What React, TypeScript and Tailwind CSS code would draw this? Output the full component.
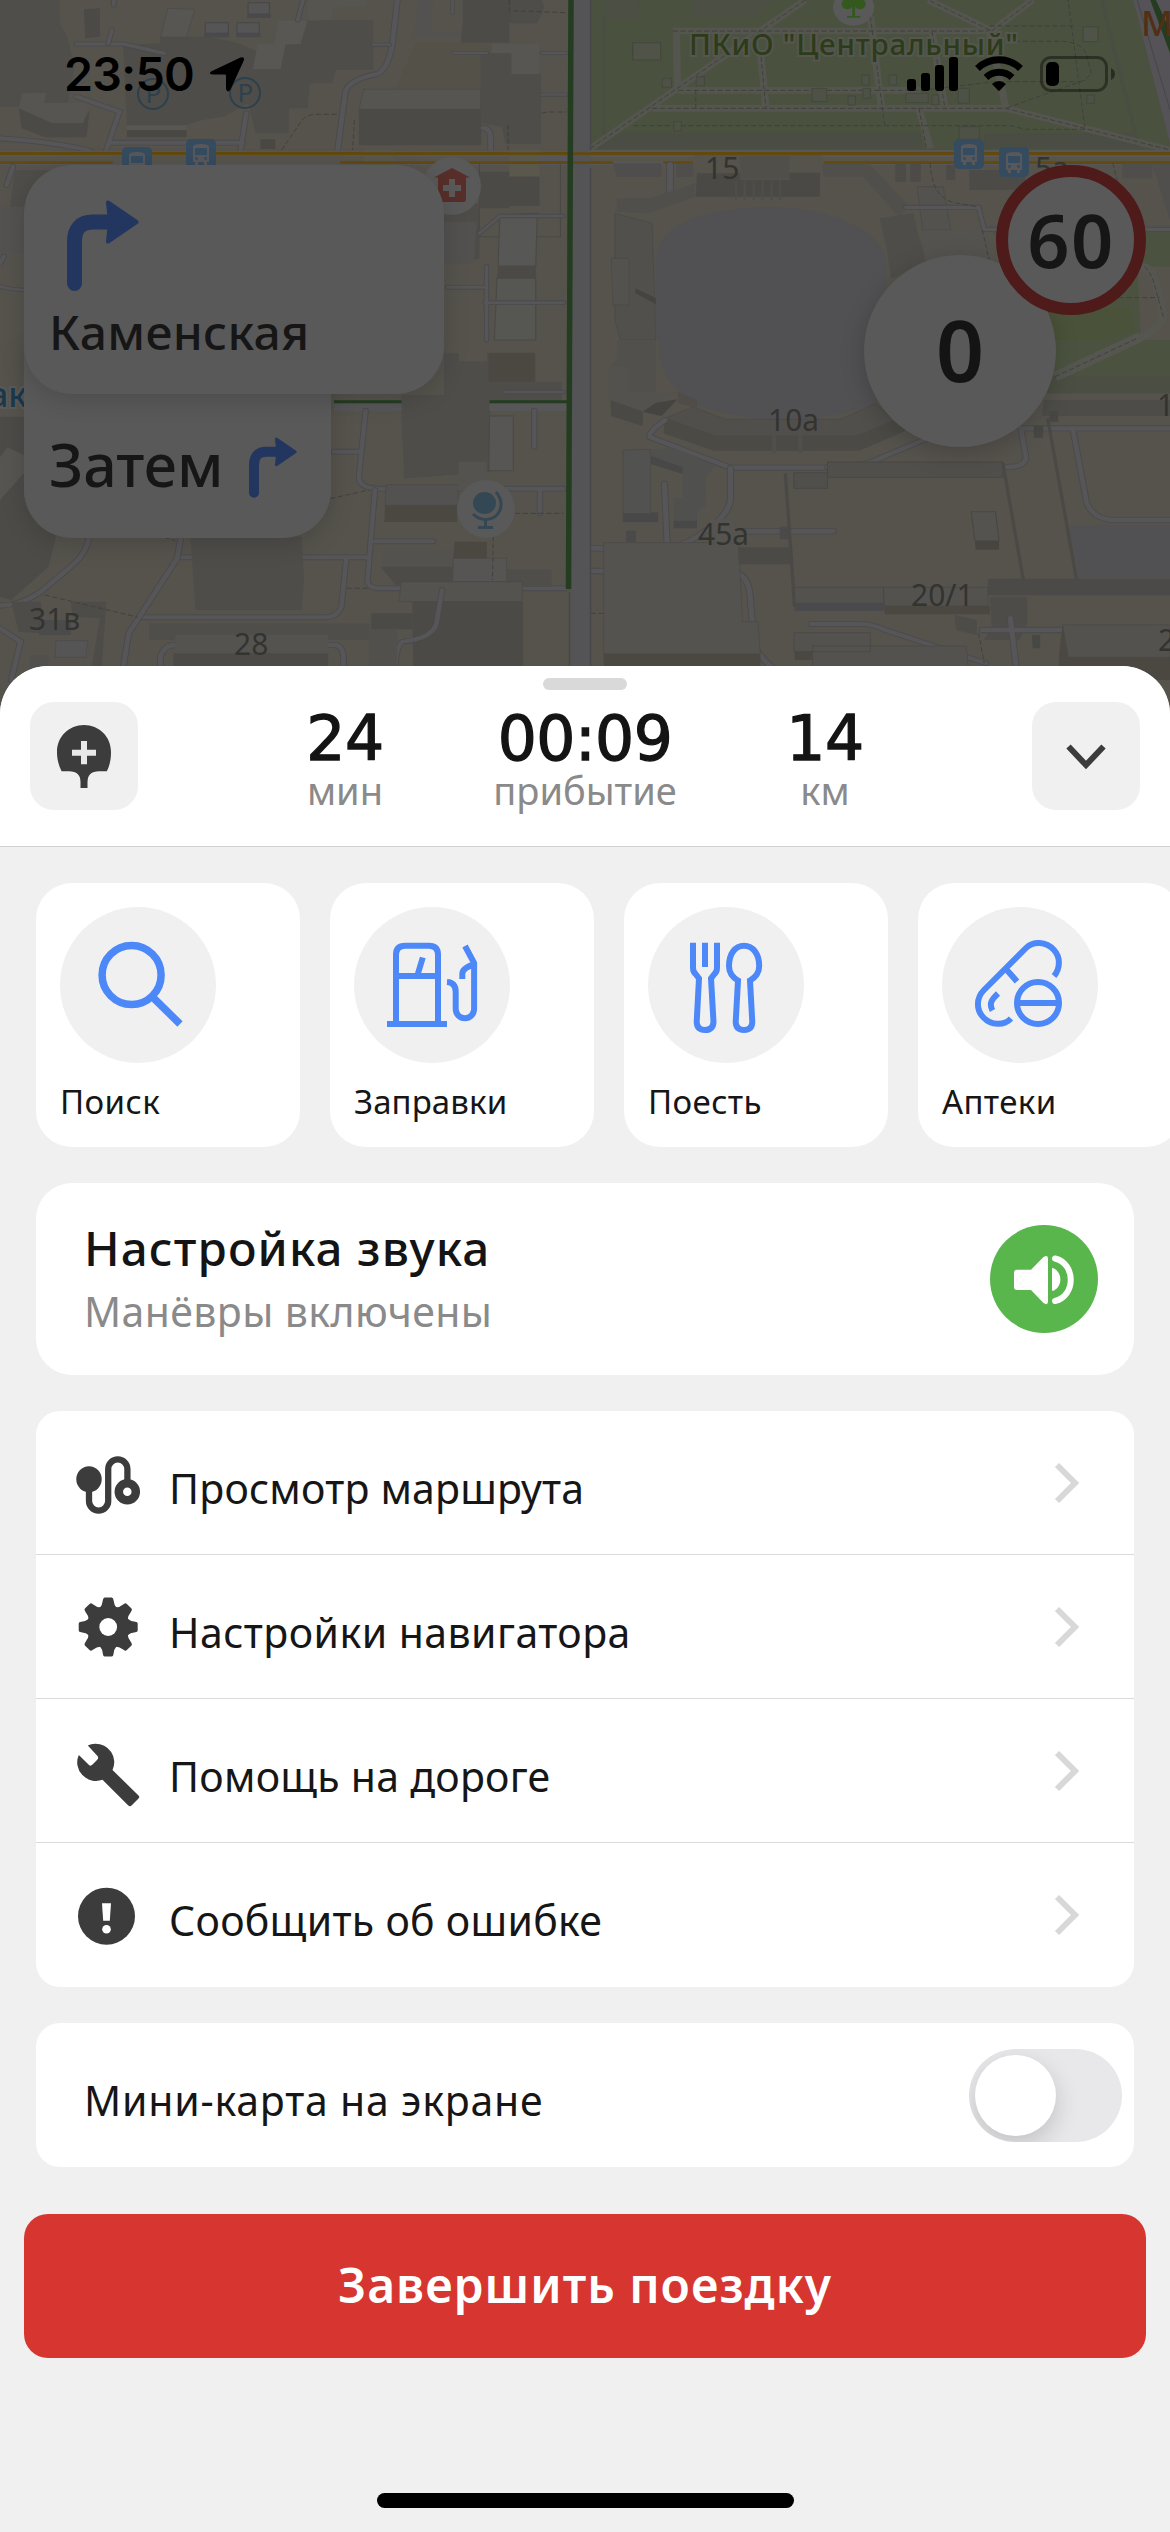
import React from "react";

type Category = { label: string; icon: React.ReactNode; tracking: string };
type MenuItem = { label: string; icon: React.ReactNode; tracking: string };

/* ---------- map ---------- */

function Road({ d, w = 14 }: { d: string; w?: number }) {
  return (
    <>
      <path d={d} stroke="#4a4a4b" strokeWidth={w + 5} fill="none" strokeLinecap="round" />
      <path d={d} stroke="#565659" strokeWidth={w} fill="none" strokeLinecap="round" />
    </>
  );
}

function Dashed({ d }: { d: string }) {
  return <path d={d} stroke="#3e3e3a" strokeWidth="2.5" strokeDasharray="14 7" fill="none" />;
}

function BusStop({ x, y }: { x: number; y: number }) {
  return (
    <g transform={`translate(${x} ${y})`}>
      <rect width="30" height="30" rx="5" fill="#354b5f" />
      <path
        d="M7 8Q7 5 15 5Q23 5 23 8V23H21V26H18V23H12V26H9V23H7Z"
        fill="#58585a"
      />
      <rect x="9" y="9" width="12" height="7" fill="#354b5f" />
      <circle cx="10.5" cy="19.5" r="1.4" fill="#354b5f" />
      <circle cx="19.5" cy="19.5" r="1.4" fill="#354b5f" />
    </g>
  );
}

function TileNW() {
  return (
    <g transform="scale(0.3731 0.3333)">
      <path d="M0 0H160V70L180 110L200 200L180 320H0Z" fill="#4f4e4b" />
      <path d="M430 110H560L640 130L700 160L760 130L820 60H1000V210H900L890 250H830L825 325H775V400H685L665 310L600 350L540 360L500 375H340L330 135L430 130Z" fill="#4e4d4a" />
      <path d="M340 390H500V412H340Z" fill="#4a4843" />
      <path d="M450 25L522 28L500 112L430 112Z" fill="#575653" stroke="#4a4a47" strokeWidth="2" />
      <path d="M825 0H985V20L890 24V60L825 62Z" fill="#575550" />
      <path d="M745 62H825L805 132L765 134L752 207H678L690 132H735Z" fill="#585753" />
      <path d="M340 378H500V390H340Z" fill="#585753" />
      <path d="M665 8H722V42H665ZM550 68H612V100H550ZM635 68H695V100H635Z" fill="#555556" stroke="#474748" strokeWidth="3" />
      <path d="M662 42H726V54H662ZM547 100H614V112H547ZM633 100H698V112H633Z" fill="#4a4a4c" />
      <path d="M225 28L268 25V110L228 115Z" fill="#4b4a46" />
      <path d="M60 280L125 278L118 308H238L222 370H140L50 325Z" fill="#565551" />
      <path d="M50 325L140 370H222L240 330L232 412H122L58 385Z" fill="#4b4a46" />
      <path d="M1125 0H1240V112H1105Z" fill="#535251" />
      <path d="M1160 0H1240V95H1155Z" fill="#56534d" />
      <path d="M1240 0H1370V68H1240ZM1240 68H1365V128H1235Z" fill="#4d4b48" />
      <path d="M1115 128H1318L1325 265H1060Z" fill="#545149" />
      <path d="M975 268H1288V328H962Z" fill="#565552" stroke="#4a4a48" strokeWidth="2" />
      <path d="M962 328H1290V436H962Z" fill="#4c4a46" />
      <path d="M1318 132H1445V222H1370V160H1318Z" fill="#575653" />
      <path d="M1288 160H1370V222H1450V432H1355L1345 380L1290 370Z" fill="#4e4d4a" />
      <path d="M1370 0H1450L1460 20L1440 70H1370Z" fill="#4e4d4a" />
      <path d="M698 418H738V447H698Z" fill="#4a4843" />
      <Road d="M205 132H330Q400 150 440 160" w={10} />
      <Road d="M300 90L290 130" w={10} />
      <Road d="M305 0V15M812 0L798 60" w={10} />
      <Road d="M205 290L320 335L285 450M0 415Q140 425 240 452M300 428H650M660 340L645 450" w={12} />
      <Road d="M1065 0L1052 130Q1040 210 1010 222Q930 240 925 280L905 450" w={13} />
      <Road d="M1215 159H1305M1452 159H1518M1452 284H1518M1000 134H1045M1213 0V40" w={7} />
      <Road d="M1295 384Q1315 384 1315 420V450" w={13} />
      <Dashed d="M755 450L810 360Q820 345 845 343H905M1365 0V32L1518 38M950 360L945 450M1362 375V450M1452 340L1465 336H1518" />
      <path d="M0 452H1568V496H0Z" fill="#57565a" />
      <path d="M0 470H300V482H0ZM915 470H975V482H915Z" fill="#585546" />
      <path d="M0 456H1568V465H0ZM0 484H330V492H0ZM400 484H1568V492H400Z" fill="#62490f" />
      <path d="M302 468H915V492H302ZM1057 470H1365V492H1057Z" fill="#56544d" />
      <path d="M975 450H1057V496H975ZM1365 450H1446V530H1365Z" fill="#5a574c" />
      <path d="M1285 515H1365V625H1285ZM1365 530H1446V618H1365Z" fill="#4b4a46" />
      <path d="M1180 610H1285V775L1240 790H1190Z" fill="#4e4c48" />
      <path d="M1285 490H1502V710H1285Z" fill="none" stroke="#4a4946" strokeWidth="3" />
      <path d="M1340 645L1440 640L1436 798H1335Z" fill="#575755" stroke="#4a4946" strokeWidth="3" />
      <path d="M1335 798H1436V835H1332Z" fill="#4b4a46" />
      <path d="M1332 835H1436V1020H1325Z" fill="#565653" stroke="#4a4946" strokeWidth="3" />
      <path d="M1190 665H1278L1270 790H1190Z" fill="#525150" />
      <Road d="M1200 862H1300M1304 800V1020M1300 908H1510" w={9} />
      <Road d="M1510 648H1340L1285 700" w={8} />
      <Road d="M35 500L18 555M0 790L10 770" w={12} />
      <path d="M40 510H140V600L65 640H25Z" fill="#4e4d4a" />
      <path d="M0 620H64V760H0Z" fill="#535250" />
      <Road d="M0 860Q40 870 64 870" w={8} />
    </g>
  );
}

function TileNE() {
  return (
    <g transform="translate(585 0) scale(0.3731 0.3333)">
      <path d="M15 0H1470L1568 430V450H15Z" fill="#4a523f" />
      <path d="M1470 0H1568V430Z" fill="#555357" />
      <path d="M55 0H145V60H55ZM285 0H500L470 50H285Z" fill="#4c4f44" />
      <path d="M128 128H203V180H128ZM1335 80H1375V125H1335Z" fill="#505347" stroke="#42473a" strokeWidth="3" />
      <path d="M50 398H900L905 445H20ZM1070 400H1480L1485 445H1070Z" fill="#4a4d43" />
      <g stroke="#53554e" strokeWidth="20" fill="none">
        <path d="M590 0L15 445M235 93H1090L920 0M1090 93L1200 0M245 95L248 270M250 271H900M180 325H1128M470 150L485 325M765 50L795 325M930 95L965 325M895 325L925 445M1085 95L1128 325L1568 450" />
      </g>
      <g stroke="#494d42" strokeWidth="10" fill="none">
        <path d="M50 45V400M1385 0L1475 400" />
      </g>
      <Dashed d="M590 0L15 445M235 93H1090L920 0M1090 93L1200 0M250 271H900L1100 245H1330M180 325H1128L1568 450M130 377H1140L1180 388H1340L1295 0M470 150L485 325M765 50L803 375M930 95L965 325M895 325L915 445M297 270V325M1085 78H1310M1110 124H1280Q1340 130 1345 170L1357 220L1340 240L1128 325" />
      <g fill="#4d5146" stroke="#40453a" strokeWidth="2">
        <path d="M608 265H648V305H608ZM1000 265H1030V310H1000ZM207 235H232V262H207ZM298 230H320V258H298ZM742 225H762V255H742ZM815 225H835V255H815ZM745 265H765V295H745ZM705 288H725V315H705ZM1345 285H1365V310H1345ZM238 365H258V393H238ZM1003 380H1057V418H1003ZM860 280H920V308H860ZM930 285H948V315H930Z" />
      </g>
      <circle cx="720" cy="22" r="55" fill="#595959" />
      <path d="M702 -5A17 17 0 0 0 690 20A15 15 0 0 0 716 20V48H702V53H738V48H724V20A15 15 0 0 0 750 20A17 17 0 0 0 738 -5Z" fill="#34591f" />
      <path d="M1515 0L1568 160V90L1530 0Z" fill="#243c20" />
      <path d="M1480 0L1568 330" stroke="#47484a" strokeWidth="3" />

      <path d="M0 450H1568V496H0Z" fill="#57565a" />
      <path d="M0 472H1568V484H0Z" fill="#585546" />
      <path d="M0 456H1568V465H0ZM0 484H75V492H0ZM210 484H290V492H210ZM640 484H1568V492H640Z" fill="#62490f" />

      <path d="M75 490H205V530H85ZM245 490H290V530H245Z" fill="#4f4e4c" />
      <path d="M290 460H635V530H295Z" fill="#55534b" />
      <path d="M415 468H548V538H415Z" fill="#504f4a" />
      <path d="M300 520H415V540H548V518H630V590H297Z" fill="#4a4945" />
      <path d="M405 542V600M428 542V600M452 542V600M476 542V600M500 542V600M523 542V600" stroke="#504e4a" strokeWidth="6" />
      <path d="M635 490H715L760 530H640ZM715 490H760L870 620L840 650Z" fill="#504f4c" />
      <Road d="M228 495V575" w={16} />
      <path d="M85 595H175L295 550V590L170 640L85 635Z" fill="#504f4c" />
      <path d="M80 640L180 670L190 1020H95L80 960Z" fill="#51504d" stroke="#4a4946" strokeWidth="2" />
      <path d="M70 775H118V915H75Z" fill="#53524f" stroke="#4a4946" strokeWidth="2" />
      <path d="M135 865L190 895V912L135 880Z" fill="#454440" />
      <path d="M190 790Q190 690 300 650Q390 620 500 620Q620 625 700 665Q800 710 808 790V1020H190Z" fill="#515154" />
      <path d="M790 655L880 640L890 690L920 800L820 835L808 740Z" fill="#4e4d49" />
      <path d="M890 560H960L980 690H905Z" fill="#53524f" stroke="#4a4946" strokeWidth="2" />
      <path d="M905 690H1075L1085 780H910Z" fill="#545350" />
      <Road d="M860 622H1055L1070 688H1568" w={10} />
      <path d="M1030 510H1180V570H1030ZM832 490H860V545H832ZM872 490H900V545H872ZM968 495H992V540H968Z" fill="#4c4b47" />
      <path d="M1440 490H1520V535H1440Z" fill="#4f4e4c" />
      <path d="M1092 696H1568V800H1500L1480 790L1490 1020H1230V900Z" fill="#4b5340" />
      <path d="M1490 800Q1520 800 1530 850L1550 940Q1550 980 1480 1020" stroke="#565651" strokeWidth="22" fill="none" />
      <Dashed d="M925 490Q930 600 1000 610L1050 620M1065 690L1085 790M1500 800Q1520 820 1530 870L1550 950M1430 893H1540M1415 490L1430 560" />
      <path d="M1520 490L1568 660V490Z" fill="#504f4d" />
      <path d="M1235 922H1460L1475 990L1400 1020H1240Z" fill="#4a5239" />
    </g>
  );
}

function TileSW() {
  return (
    <g transform="translate(0 340) scale(0.3731 0.3333)">
      <path d="M0 230H64V470L150 590L130 680L30 780L0 770Z" fill="#4c4b48" />
      <path d="M0 350L20 322L64 345V400L0 480Z" fill="#565551" />
      <path d="M1190 40H1230V64H1305V40H1435V125H1505V182H1315V395L1083 415L1075 180H1190Z" fill="#4e4d4a" />
      <path d="M1310 38H1433V125H1310Z" fill="#4b4842" />
      <path d="M895 190H1524V212H895Z" fill="#57575a" />
      <Road d="M980 212L962 410Q960 442 1010 446H1510M895 335H960M1432 212V320M1447 450V520" w={12} />
      <Road d="M1005 450L985 720Q985 745 1020 745H1520M1005 604H1160M485 652H985M928 655L915 800Q905 832 870 832H380" w={12} />
      <Road d="M1355 156H1510" w={8} />
      <path d="M895 181H1530V190H895Z" fill="#243d21" />
      <path d="M1075 165H1312V395L1085 415Z" fill="#4e4d4a" />
      <path d="M1312 228H1376V392H1310Z" fill="#575654" stroke="#4a4946" strokeWidth="3" />
      <path d="M1035 434H1228V496H1032Z" fill="#535250" stroke="#4a4946" strokeWidth="2" />
      <path d="M1032 496H1225V546H1030Z" fill="#4b4842" />
      <path d="M1230 365H1305V450H1225Z" fill="#545350" />
      <path d="M1218 605H1305V655H1215Z" fill="#4b4842" />
      <path d="M1028 632H1215V680H1020Z" fill="#53524f" />
      <path d="M1020 680H1215V735H1060Z" fill="#4c4b47" />
      <path d="M1215 655H1358V725H1213Z" fill="#565553" stroke="#4a4946" strokeWidth="2" />
      <path d="M1358 688H1478V740H1358Z" fill="#4f4e4b" />
      <path d="M1075 725H1400V785H1070Z" fill="#545350" stroke="#4a4946" strokeWidth="2" />
      <path d="M1105 785H1402V1020H1108ZM995 820H1105V868H995Z" fill="#4c4a46" />
      <path d="M510 590H808L815 720L808 810H524L515 660Z" fill="#4e4d4a" />
      <Road d="M240 590Q230 640 200 670L110 755Q60 795 0 797M485 590L475 655L345 880L325 1020" w={13} />
      <Road d="M0 865L55 905L30 1020M430 1000V950Q440 915 470 915H900Q925 920 920 980V1020" w={13} />
      <Road d="M1185 750L1170 850Q1160 895 1080 905Q1060 915 1060 1000" w={12} />
      <path d="M30 785H110V880L50 875ZM190 785H285L270 1020H240L268 835L195 830Z" fill="#4d4c49" />
      <path d="M105 840H190V885H105Z" fill="#4b4b4b" />
      <path d="M150 902H235L230 952H148Z" fill="#555556" stroke="#4a4a4a" strokeWidth="2" />
      <path d="M400 850H990V900H400Z" fill="#4f4e4b" />
      <path d="M470 884H880V940H468Z" fill="#545350" />
      <path d="M465 940H880V1020H465Z" fill="#4c4a46" />
      <path d="M990 868V1020H1065V868ZM80 945H130V1020H80Z" fill="#51504c" />
      <Dashed d="M885 476L990 450M440 592L470 602M120 765L370 832M930 745H985M1380 520H1510M1322 590L1320 720" />
    </g>
  );
}

function TileSE() {
  return (
    <g transform="translate(585 340) scale(0.3731 0.3333)">
      <path d="M198 0H830L780 190Q650 245 500 240Q360 225 290 190Q200 120 198 30Z" fill="#515154" />
      <path d="M85 0H190V155L115 157V80H65L85 60Z" fill="#51504d" />
      <path d="M65 80H115V157H245L155 215L65 180Z" fill="#53524f" />
      <path d="M68 180L155 215V258L70 228Z" fill="#4a4945" />
      <path d="M155 215L190 188L248 178L205 228Z" fill="#454440" />
      <path d="M215 235L290 200L375 238H685L780 190L830 245L725 288H350Z" fill="#514f4b" stroke="#4a4946" strokeWidth="2" />
      <path d="M215 235L350 288H725L830 240L860 272L735 332H345L210 280Z" fill="#4b4a45" />
      <path d="M507 275V340M577 275V340" stroke="#514f4b" strokeWidth="11" />
      <path d="M248 155L300 180V205L250 190Z" fill="#504d49" />
      <Road d="M215 240Q165 280 175 292L390 383H650Q740 385 790 355L960 275" w={13} />
      <Road d="M390 385V480Q385 530 300 590Q260 622 200 625H15M213 432L220 610M430 574H665" w={14} />
      <Road d="M650 381H1135Q1190 380 1180 340L1168 265H1568M1308 270L1345 490Q1365 540 1420 540H1568" w={13} />
      <path d="M1230 0H1568V160H1245Z" fill="#4b5340" />
      <path d="M1245 108H1568V160H1235Z" fill="#4b4e42" />
      <path d="M1260 110L1490 -10" stroke="#555650" strokeWidth="30" />
      <Dashed d="M1260 110L1480 -5" />
      <path d="M1230 180H1568V228H1225Z" fill="#4d4c49" />
      <path d="M1245 212H1268V245H1245ZM1203 258H1228V293H1203Z" fill="#474744" />
      <path d="M102 330L175 328V518H195V545H102Z" fill="#525251" stroke="#4a4946" strokeWidth="2" />
      <path d="M177 328L240 325L350 378L322 410L325 495L300 515V565H238V475H262V400L177 372Z" fill="#50504f" />
      <path d="M102 520H195V545H102ZM238 542H300V565H238ZM177 348L262 382V402L177 372Z" fill="#484848" />
      <path d="M650 366H1120V412H650ZM560 398H650V445H560Z" fill="#504f4b" stroke="#484744" strokeWidth="3" />
      <path d="M537 400L562 800M1120 370L1175 720M1240 235L1325 765" stroke="#4b4946" strokeWidth="9" fill="none" />
      <path d="M1035 515H1100L1110 603H1045Z" fill="#555350" stroke="#484744" strokeWidth="3" />
      <path d="M1045 603H1110V629H1047Z" fill="#484540" />
      <path d="M1298 556H1568V715H1325Z" fill="#515154" />
      <path d="M1080 716H1568V766H1080Z" fill="#4c4a49" />
      <Road d="M15 693H390Q435 700 442 760L452 900Q455 940 505 985" w={14} />
      <path d="M50 608H412L422 845H463L470 942H50Z" fill="#545350" stroke="#4a4946" strokeWidth="2" />
      <path d="M50 942H470V1020H50Z" fill="#4b4842" />
      <path d="M410 622H550V673H412Z" fill="#4c4a47" />
      <path d="M335 538H400V608H335Z" fill="#555450" />
      <path d="M522 560H545V598H522ZM110 572H136V606H110Z" fill="#4a4a4a" />
      <path d="M562 742H800V790H562ZM800 742H1080V798H803Z" fill="#53524f" stroke="#484744" strokeWidth="2" />
      <path d="M562 790H802V813H562Z" fill="#4a4a4c" />
      <path d="M803 798H1085V823H803Z" fill="#4b4842" />
      <path d="M1085 772H1185V850L1165 900H1070L1090 860ZM990 825L1050 840V885L995 870Z" fill="#4d4c48" />
      <Road d="M605 852H740Q770 852 800 868L1075 970" w={12} />
      <Road d="M1065 870H1280M1140 835L1160 1020" w={14} />
      <path d="M560 878H765V935H560ZM610 918H1022L1030 1020H610Z" fill="#53524f" stroke="#484744" strokeWidth="2" />
      <path d="M562 935H608V960H562Z" fill="#4b4842" />
      <path d="M1280 855H1568V952H1295Z" fill="#53524f" stroke="#484744" strokeWidth="2" />
      <path d="M1280 855L1295 952H1568V1020H1270V950Z" fill="#4b4842" />
      <path d="M1198 885H1220V925H1200Z" fill="#474744" />
      <Dashed d="M15 820H50M1055 880L1070 970" />
    </g>
  );
}

function MapView() {
  return (
    <svg className="block h-full w-full" viewBox="0 0 1170 720" fontFamily="'Noto Sans', sans-serif">
      <rect width="1170" height="720" fill="#56534d" />
      <TileNW />
      <TileNE />
      <TileSW />
      <TileSE />

      {/* vertical avenue */}
      <rect x="572" width="18" height="720" fill="#545456" />
      <path d="M590.5 0V150M590.5 168V720M569.5 592V720" stroke="#46474a" strokeWidth="1.5" />
      <path d="M0 152.2H1170V155H0ZM340 161.3H600V164H340Z" fill="#62490f" />
      <path d="M571 0L568.5 589" stroke="#243d21" strokeWidth="5.5" />

      <g fill="none" stroke="#2c414d" strokeWidth="2">
        <circle cx="153" cy="94" r="15" />
        <circle cx="245" cy="93" r="15" />
      </g>
      <g fill="#2c414d" fontSize="26">
        <text x="145.500" y="103">P</text>
        <text x="237.500" y="102">P</text>
      </g>
      <BusStop x={122} y={147} />
      <BusStop x={186} y={139} />
      <BusStop x={954} y={139} />
      <BusStop x={999} y={147} />

      <circle cx="452" cy="186" r="29" fill="#595959" />
      <path d="M452 168L470 177.500H466V199Q466 202 463 202H441Q438 202 438 199V177.500H434Z" fill="#572e29" />
      <path d="M449 179H455V185H461V191H455V197H449V191H443V185H449Z" fill="#595959" />

      <circle cx="486" cy="509" r="29" fill="#595959" />
      <ellipse cx="484.500" cy="503" rx="11.500" ry="11" fill="#344754" />
      <path d="M496 492C506 504 500 519 486 519.500C480 519.500 476 517 473 514M485.500 519V527M478 527.500H493" stroke="#344754" strokeWidth="3" fill="none" />

      <text
        x="689"
        y="55"
        fontSize="29.500"
        fontWeight="500"
        textLength="329"
        fill="#2c3b18"
        stroke="#54564f"
        strokeWidth="4"
        paintOrder="stroke"
      >
        ПКиО "Центральный"
      </text>
      <text x="1141" y="36" fontSize="35" fontWeight="500" fill="#512f14">
        М
      </text>
      <text x="-11" y="407" fontSize="34" fontWeight="500" fill="#1c394c" stroke="#5a5a5a" strokeWidth="4" paintOrder="stroke">
        ак
      </text>
      <g fill="#333330" fontSize="30">
        <text x="705" y="179">15</text>
        <text x="1035" y="179">5а</text>
        <text x="768" y="430.500">10а</text>
        <text x="698" y="544.500">45а</text>
        <text x="911" y="605.500">20/1</text>
        <text x="1157" y="416">1</text>
        <text x="1158" y="651">2</text>
        <text x="29" y="629.500">31в</text>
        <text x="234" y="654.500">28</text>
      </g>
    </svg>
  );
}

/* ---------- icons ---------- */

function TurnRight({ className }: { className: string }) {
  return (
    <svg className={className} viewBox="0 0 72 91" fill="none">
      <path d="M7.500 83.500V42Q7.500 22 26 22H46" stroke="#22365f" strokeWidth="15" strokeLinecap="round" />
      <path d="M41 2.500L69.500 22L41 41.500L43 22Z" fill="#22365f" stroke="#22365f" strokeWidth="4" strokeLinejoin="round" />
    </svg>
  );
}

const Chevron = () => (
  <svg className="h-[42px] w-[26px]" viewBox="0 0 26 42" fill="none">
    <path d="M3 3L21 21L3 39" stroke="#d8d8d8" strokeWidth="6" />
  </svg>
);

const lineIcon = "h-[156px] w-[156px] rounded-full bg-[#f0f0f0]";

const categories: Category[] = [
  {
    label: "Поиск",
    tracking: "tracking-[0.4px]",
    icon: (
      <svg className={lineIcon} viewBox="0 0 156 156" fill="none" stroke="#4d88f8">
        <circle cx="71.600" cy="68" r="29.500" strokeWidth="7.500" />
        <path d="M92.500 90L120 117" strokeWidth="7.500" />
      </svg>
    ),
  },
  {
    label: "Заправки",
    tracking: "tracking-[0.1px]",
    icon: (
      <svg className={lineIcon} viewBox="0 0 156 156" fill="none" stroke="#4d88f8" strokeWidth="6">
        <path d="M42 117V47.700Q42 38.700 51 38.700H75Q84 38.700 84 47.700V117M33 117H93M42 69H84M68.800 50.500L63.800 67" />
        <path d="M93 75Q101.700 75.500 101.700 85V102A9.200 9.200 0 0 0 120.100 102V56L111 39M120.100 57.500Q108.300 61 108.300 67V72" />
      </svg>
    ),
  },
  {
    label: "Поесть",
    tracking: "tracking-[0.4px]",
    icon: (
      <svg className={lineIcon} viewBox="0 0 156 156" fill="none" stroke="#4d88f8" strokeWidth="6">
        <path d="M45 35.700V61Q45 65 48 67.500L51 71.500L48.700 115Q49 123 57 123Q65 123 65.500 115L63 71.500L66 67.500Q69 65 69 61V35.700M57 35.700V60" />
        <path d="M90 73.500L87.700 115Q88 123 96 123Q104 123 104.300 115L102 73.500C108 70 111.200 65 111.200 59C111.200 47 105 38.700 96 38.700C87 38.700 81 47 81 59C81 65 84 70 90 73.500Z" />
      </svg>
    ),
  },
  {
    label: "Аптеки",
    tracking: "tracking-[0.4px]",
    icon: (
      <svg className={lineIcon} viewBox="0 0 156 156" fill="none" stroke="#4d88f8" strokeWidth="6">
        <path d="M112 69C118.500 61 118.500 50 112 43C104 34 91 34 84 41L42 83C34 91 34 103 41.500 110.500C49 118.500 62 119 69 111.500M64.400 62.500L75 74.500M56 86.500C49 93 47 97 50.500 103.500" />
        <circle cx="96" cy="96" r="21" />
        <path d="M76 96H116" />
      </svg>
    ),
  },
];

const menuIcon = "h-[72px] w-[72px] shrink-0";

const menu: MenuItem[] = [
  {
    label: "Просмотр маршрута",
    tracking: "tracking-[0.2px]",
    icon: (
      <svg className={menuIcon} viewBox="0 0 72 72" fill="#3c3c3c">
        <ellipse cx="17" cy="32.300" rx="12.700" ry="13" />
        <path d="M17 34V54A9.600 9.600 0 0 0 36.200 54V22A9.600 9.600 0 0 1 55.400 22V36" fill="none" stroke="#3c3c3c" strokeWidth="6.300" />
        <circle cx="55.300" cy="44.800" r="8.500" fill="#fff" stroke="#3c3c3c" strokeWidth="8.500" />
      </svg>
    ),
  },
  {
    label: "Настройки навигатора",
    tracking: "tracking-[0.45px]",
    icon: (
      <svg className={menuIcon} viewBox="0 0 72 72" fill="#3c3c3c">
        {[0, 45, 90, 135, 180, 225, 270, 315].map((a) => (
          <path
            key={a}
            transform={`translate(36.2 36) rotate(${a})`}
            d="M-8.500 -19Q-5.800 -22 -5.300 -27Q-5 -29.500 -3.500 -29.500H3.500Q5 -29.500 5.300 -27Q5.800 -22 8.500 -19Z"
          />
        ))}
        <circle cx="36.200" cy="36" r="21.500" />
        <circle cx="36.200" cy="36" r="8.900" fill="#fff" />
      </svg>
    ),
  },
  {
    label: "Помощь на дороге",
    tracking: "tracking-[0.25px]",
    icon: (
      <svg className={menuIcon} viewBox="0 0 72 72" fill="#3c3c3c">
        <path d="M15.800 10.600Q19 8.700 23 8.700A18.800 18.500 0 0 1 40.500 35L66.500 60.500Q68 62 66.500 63.500L59.500 70.500Q58 72 56.300 70.500L30.500 44.800A18.800 18.500 0 0 1 6.800 20L17 30Q18.600 31.500 20.500 29.500L25 25Q27 23 25.500 21Z" />
      </svg>
    ),
  },
  {
    label: "Сообщить об ошибке",
    tracking: "tracking-[0.3px]",
    icon: (
      <svg className={menuIcon} viewBox="0 0 72 72" fill="#3c3c3c">
        <circle cx="34.500" cy="37.200" r="28.500" />
        <path d="M30 24.200H39L37.800 41.800H31.200Z" fill="#fff" />
        <circle cx="34.500" cy="50.200" r="4.300" fill="#fff" />
      </svg>
    ),
  },
];

/* ---------- blocks ---------- */

function StatusBar() {
  return (
    <div className="absolute inset-x-0 top-0 flex h-[148px] items-start justify-between pl-16 pr-[54px]">
      <div className="flex pt-[44px]">
        <span className="font-['Inter'] text-[46.6px] leading-[60px] font-semibold tracking-[-0.7px] text-black">
          23:50
        </span>
        <svg className="mt-[12px] ml-[15px] h-9 w-9" viewBox="0 0 36 36">
          <path d="M2 15.500L31.500 1.500Q36 0 34.800 4.500L21.500 33.500Q18.500 37.500 17 33V19.500Q16.800 18.500 15.800 18.500H3.500Q-1 18 2 15.500Z" />
        </svg>
      </div>
      <div className="flex pt-[56px]">
        <svg className="h-9 w-[52px]" viewBox="0 0 52 36">
          <rect y="23" width="9" height="12" rx="3" />
          <rect x="14" y="17" width="9" height="18" rx="3" />
          <rect x="28" y="9" width="9" height="26" rx="3" />
          <rect x="42" y="1" width="9" height="34" rx="3" />
        </svg>
        <svg className="ml-4 h-9 w-[48px]" viewBox="0 0 48 36">
          <path d="M2.500 12.500A31 31 0 0 1 45.500 12.500" fill="none" stroke="#000" strokeWidth="7" />
          <path d="M11 21.500A19 19 0 0 1 37 21.500" fill="none" stroke="#000" strokeWidth="7" />
          <path d="M17 28Q24 22 31 28L24.800 34.500Q24 35.300 23.200 34.500Z" />
        </svg>
        <svg className="ml-[17px] h-9 w-[76px]" viewBox="0 0 76 36">
          <rect x="1.500" y="1.500" width="65" height="33" rx="9.500" fill="none" stroke="#000" strokeOpacity="0.4" strokeWidth="3" />
          <path d="M71 12Q75 14 75 18Q75 22 71 24Z" fillOpacity="0.45" />
          <rect x="6" y="6" width="13" height="24" rx="5" />
        </svg>
      </div>
    </div>
  );
}

function Maneuvers() {
  return (
    <div className="absolute top-[165px] left-6 text-[#161616]">
      <div className="relative z-10 h-[229px] w-[420px] rounded-[48px] bg-[#595959] pt-[35px] pl-[25px] shadow-[0_6px_24px_rgba(0,0,0,0.15)]">
        <TurnRight className="ml-[18px] h-[91px] w-[72px]" />
        <p className="mt-[11px] text-[48px] leading-[60px] font-medium tracking-[0.3px]">Каменская</p>
      </div>
      <div className="-mt-12 flex h-[192px] w-[307px] rounded-b-[48px] bg-[#595959] pt-[78px] pl-[25px] shadow-[0_6px_24px_rgba(0,0,0,0.15)]">
        <p className="text-[59px] leading-[80px] font-medium">Затем</p>
        <TurnRight className="mt-[13px] ml-[26px] h-[61px] w-[48px]" />
      </div>
    </div>
  );
}

function Speed() {
  return (
    <>
      <div className="absolute top-[255px] left-[864px] flex h-[192px] w-[192px] items-center justify-center rounded-full bg-[#595959] pb-[3px] text-[84px] font-semibold text-[#141414] shadow-[0_6px_24px_rgba(0,0,0,0.18)]">
        0
      </div>
      <div className="absolute top-[165px] left-[996px] flex h-[150px] w-[150px] items-center justify-center rounded-full border-[12px] border-[#4f1a1a] bg-[#595959] pb-[2px] text-[74px] font-semibold tracking-[1.500px] text-[#161616]">
        60
      </div>
    </>
  );
}

function Stat({ value, unit }: { value: string; unit: string }) {
  return (
    <div className="w-60 text-center">
      <p className="font-['DejaVu_Sans'] text-[61.5px] leading-[60px] tracking-[-0.5px] text-[#141414] [-webkit-text-stroke:1.3px_#141414]">
        {value}
      </p>
      <p className="text-[38px] leading-[42px] text-[#8a8a8a]">{unit}</p>
    </div>
  );
}

export default function App() {
  const [miniMap, setMiniMap] = React.useState(false);

  return (
    <div className="relative h-[2532px] w-[1170px] overflow-hidden bg-[#56534d] font-['Noto_Sans',sans-serif]">
      <div className="relative h-[720px]">
        <MapView />
        <Maneuvers />
        <Speed />
        <StatusBar />
      </div>

      <div className="relative -mt-[54px] h-[1866px] overflow-hidden rounded-t-[48px] bg-[#f0f0f0]">
        {/* Trip summary */}
        <header className="h-[181px] border-b border-[#d0d0d0] bg-white pt-3">
          <div className="mx-auto h-3 w-[84px] rounded-full bg-[#d9d9d9]" />
          <div className="flex justify-between px-[30px] pt-3">
            <button className="h-[108px] w-[108px] rounded-3xl bg-[#f0f0f0]" aria-label="Добавить точку">
              <svg viewBox="0 0 108 108">
                <path
                  d="M54 23C39 23 27 34.500 27 50C27 57 28.500 63 31.600 69.300H39Q50.500 69.500 50.500 80V86H57.500V80Q57.500 69.500 69 69.300H76.800C80 63 81 57 81 50C81 34.500 69 23 54 23Z"
                  fill="#3c3c3c"
                />
                <path d="M42 50.700H66M54 39V62.300" stroke="#e8e8e8" strokeWidth="6" />
              </svg>
            </button>
            <div className="flex pt-[7px]">
              <Stat value="24" unit="мин" />
              <Stat value="00:09" unit="прибытие" />
              <Stat value="14" unit="км" />
            </div>
            <button className="h-[108px] w-[108px] rounded-3xl bg-[#f0f0f0]" aria-label="Свернуть">
              <svg viewBox="0 0 108 108" fill="none">
                <path d="M36.500 44.500L54 63L71.500 44.500" stroke="#3c3c3c" strokeWidth="6" />
              </svg>
            </button>
          </div>
        </header>

        {/* Categories */}
        <div className="flex gap-[30px] pt-9 pl-9">
          {categories.map((c) => (
            <div key={c.label} className="h-[264px] w-[264px] shrink-0 rounded-[36px] bg-white pt-6 pl-6">
              {c.icon}
              <p className={`mt-[19px] text-[33px] leading-10 text-[#161616] ${c.tracking}`}>{c.label}</p>
            </div>
          ))}
        </div>

        {/* Sound */}
        <div className="mx-9 mt-9 flex h-[192px] items-center justify-between rounded-[36px] bg-white pr-9 pl-12">
          <div className="pb-[3px]">
            <p className="text-[47.5px] leading-[64px] font-medium tracking-[1.1px] text-[#141414]">Настройка звука</p>
            <p className="mt-[3px] text-[41px] leading-[56px] tracking-[0.4px] text-[#8a8a8a]">Манёвры включены</p>
          </div>
          <svg className="h-[108px] w-[108px] rounded-full bg-[#59b64d]" viewBox="0 0 108 108" fill="#fff">
            <path d="M27 44.700H41L53.500 32Q58 29 58 34V76Q58 81 53.500 78L41 65H27Q24 65 24 62V47.700Q24 44.700 27 44.700Z" />
            <path d="M62 43.500Q62.500 42.300 64 43.500C72.500 48 72.500 61 64 65.500Q62.500 66.500 62 65Z" />
            <path d="M65 33.500C86 38.500 86 71 65 76" fill="none" stroke="#fff" strokeWidth="6" strokeLinecap="round" />
          </svg>
        </div>

        {/* Menu */}
        <div className="mx-9 mt-9 overflow-hidden rounded-3xl bg-white">
          {menu.map((m) => (
            <div
              key={m.label}
              className="flex h-36 items-center border-b border-[#dadada] pr-[54px] pl-9 last:border-b-0"
            >
              {m.icon}
              <span className={`ml-[25px] flex-1 pt-[10px] text-[41px] leading-[56px] text-[#161616] ${m.tracking}`}>
                {m.label}
              </span>
              <Chevron />
            </div>
          ))}
        </div>

        {/* Mini map */}
        <div className="mx-9 mt-9 flex h-36 items-center justify-between rounded-3xl bg-white pr-3 pl-12">
          <span className="pt-[10px] text-[41px] leading-[56px] tracking-[0.8px] text-[#161616]">
            Мини-карта на экране
          </span>
          <button
            role="switch"
            aria-checked={miniMap}
            onClick={() => setMiniMap(!miniMap)}
            className={`flex h-[93px] w-[153px] items-center overflow-hidden rounded-full px-[6px] ${miniMap ? "justify-end bg-[#59b64d]" : "bg-[#e8e8ea]"}`}
          >
            <span className="h-[81px] w-[81px] rounded-full bg-white shadow-[0_9px_24px_rgba(0,0,0,0.17)]" />
          </button>
        </div>

        <button className="mx-6 mt-[47px] block h-36 w-[1122px] rounded-3xl bg-[#d6362f] pb-[2px] text-[48px] font-semibold tracking-[1px] text-white">
          Завершить поездку
        </button>

        <div className="mx-auto mt-[135px] h-[15px] w-[417px] rounded-full bg-black" />
      </div>
    </div>
  );
}
